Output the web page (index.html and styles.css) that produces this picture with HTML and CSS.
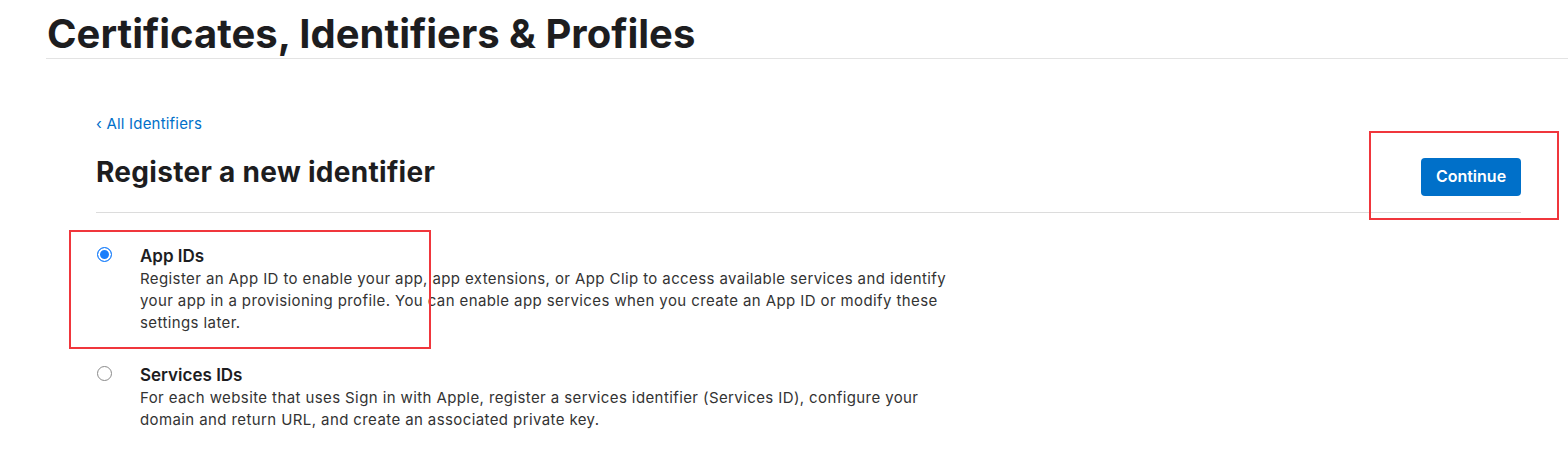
FILE: index.html
```html
<!DOCTYPE html>
<html lang="en">
<head>
  <meta charset="UTF-8" />
  <meta name="viewport" content="width=device-width, initial-scale=1.0" />
  <title>Certificates, Identifiers &amp; Profiles</title>
  <link rel="stylesheet" href="styles.css">
</head>
<body>
  <header class="page-header">
    <h1>Certificates, Identifiers &amp; Profiles</h1>
  </header>

  <main class="content">
    <a class="back-link" href="#">&lsaquo; All Identifiers</a>

    <div class="title-row">
      <h2>Register a new identifier</h2>
      <button class="continue">Continue</button>
    </div>

    <ul class="options">
      <li class="option">
        <input type="radio" name="idtype" id="appids" checked>
        <label for="appids">
          <span class="option-title">App IDs</span>
          <span class="option-desc">Register an App ID to enable your app, app extensions, or App Clip to access available services and identify your app in a provisioning profile. You can enable app services when you create an App ID or modify these settings later.</span>
        </label>
      </li>
      <li class="option">
        <input type="radio" name="idtype" id="servicesids">
        <label for="servicesids">
          <span class="option-title">Services IDs</span>
          <span class="option-desc">For each website that uses Sign in with Apple, register a services identifier (Services ID), configure your domain and return URL, and create an associated private key.</span>
        </label>
      </li>
    </ul>
  </main>

  <!-- annotation boxes drawn over the screenshot -->
  <div class="mark mark-continue"></div>
  <div class="mark mark-appids"></div>
</body>
</html>
```

FILE: styles.css
```css
body {
  font-family: Inter, "Noto Sans", Arial, sans-serif;
  background: #fff;
  color: #1d1d1f;
  margin: 0;
  position: relative;
}
.page-header {
  margin-left: 46px;
  padding: 10px 0 0 1px;
  border-bottom: 1px solid #e3e3e3;
}
.page-header h1 {
  margin: 0;
  font-size: 40px;
  line-height: 48px;
  font-weight: 700;
  letter-spacing: 0;
}
.content {
  padding: 0 47px 0 96px;
}
.back-link {
  display: block;
  margin-top: 55px;
  font-size: 15px;
  line-height: 20px;
  color: #0070c9;
  text-decoration: none;
  letter-spacing: 0.2px;
}
.title-row {
  display: flex;
  justify-content: space-between;
  align-items: flex-start;
  margin-top: 21px;
  border-bottom: 1px solid #dcdcdc;
}
.title-row h2 {
  margin: 0;
  padding-bottom: 23px;
  font-size: 28px;
  line-height: 34px;
  font-weight: 700;
  letter-spacing: 0.3px;
}
.continue {
  margin-top: 3px;
  width: 100px;
  height: 38px;
  padding: 0 0 3px;
  background: #0070c9;
  color: white;
  border: none;
  border-radius: 4px;
  font-family: inherit;
  font-size: 16px;
  font-weight: 600;
}
.options {
  list-style: none;
  margin: 0;
  padding: 32px 0 0 0;
}
.option {
  display: flex;
  margin-bottom: 30px;
}
.option input {
  appearance: none;
  flex: none;
  width: 15px;
  height: 15px;
  margin: 2px 28px 0 1px;
  border: 1px solid #8a8a8a;
  border-radius: 50%;
  background: #fff;
}
.option input:checked {
  border: 1.5px solid #1a7ffb;
  background: #1a7ffb;
  box-shadow: inset 0 0 0 2px #fff;
}
.option label {
  display: block;
  width: 830px;
}
.option-title {
  display: block;
  font-size: 17px;
  line-height: 22px;
  font-weight: 600;
}
.option-desc {
  display: block;
  margin-top: 1px;
  font-size: 15px;
  line-height: 22px;
  color: #333;
  letter-spacing: 0.4px;
}
.mark {
  position: absolute;
  border: 2px solid #f0363c;
  box-sizing: border-box;
}
.mark-continue {
  left: 1369px;
  top: 131px;
  width: 190px;
  height: 89px;
}
.mark-appids {
  left: 69px;
  top: 230px;
  width: 362px;
  height: 119px;
}
```
